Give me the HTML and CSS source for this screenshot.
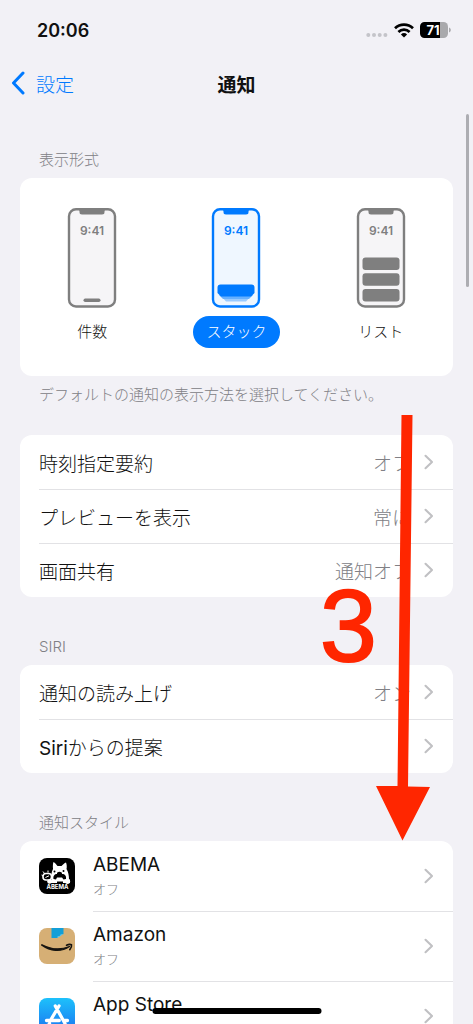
FILE: index.html
```html
<!DOCTYPE html>
<html lang="ja">
<head>
<meta charset="utf-8">
<meta name="viewport" content="width=device-width, initial-scale=1">
<title>通知</title>
<link rel="stylesheet" href="styles.css">
</head>
<body>
<svg class="defs" aria-hidden="true">
  <symbol id="chevron" viewBox="0 0 10 16"><path d="M1.5 1.8 8 8l-6.500 6.200" fill="none" stroke="currentColor" stroke-width="2.100" stroke-linecap="round" stroke-linejoin="round"/></symbol>
  <symbol id="handset" viewBox="0 0 50 100">
    <rect x="2" y="1.300" width="46" height="97.200" rx="7" fill="var(--screen)" stroke="currentColor" stroke-width="2.400"/>
    <path d="M9 1h32c-3 0-3.500 1-3.500 3 0 1.800-.8 2.500-2.500 2.500H15c-1.700 0-2.500-.7-2.500-2.500 0-2-.5-3-3.500-3z" fill="currentColor"/>
  </symbol>
</svg>
<div class="screen">
  <header class="top">
    <div class="status">
      <time class="time">20:06</time>
      <div class="indicators">
        <svg class="dots" viewBox="0 0 22 6" aria-hidden="true"><g fill="#c4c4c9"><circle cx="2.300" cy="3" r="2"/><circle cx="8" cy="3" r="2"/><circle cx="13.700" cy="3" r="2"/><circle cx="19.400" cy="3" r="2"/></g></svg>
        <svg class="wifi" viewBox="0 0 20 15" aria-hidden="true"><g fill="none" stroke="#000" stroke-width="2.700"><path d="M1 5.300a13 13 0 0 1 18 0"/><path d="M4.400 8.900a8.200 8.200 0 0 1 11.200 0"/></g><path d="M10 14.500 6.900 11.400a4.500 4.500 0 0 1 6.200 0z"/></svg>
        <svg class="battery" viewBox="0 0 32 16" aria-label="71%"><path d="M20 0h3.500a4.500 4.500 0 0 1 4.500 4.500v7a4.500 4.500 0 0 1-4.500 4.500H20z" fill="#a9a9ac"/><path d="M20 0H4.500A4.500 4.500 0 0 0 0 4.500v7A4.500 4.500 0 0 0 4.500 16H20z"/><path d="M29 5.500c2.400.8 2.400 4.200 0 5z" fill="#a9a9ac"/><text x="13" y="13" text-anchor="middle" class="level">71</text></svg>
      </div>
    </div>
    <nav class="nav">
      <a class="back" href="#"><svg class="back-icon" viewBox="0 0 14 24" aria-hidden="true"><path d="M12 2 2.500 12 12 22" fill="none" stroke="currentColor" stroke-width="3" stroke-linecap="round" stroke-linejoin="round"/></svg>設定</a>
      <h1 class="title">通知</h1>
    </nav>
  </header>

  <main class="content">
    <section class="group">
      <h2 class="label">表示形式</h2>
      <div class="card styles" role="radiogroup" aria-label="表示形式">
        <label class="style">
          <input class="pick" type="radio" name="style">
          <svg class="phone" viewBox="0 0 50 100" aria-hidden="true"><use href="#handset"/><text x="25" y="27" text-anchor="middle" class="clock">9:41</text><rect x="16.500" y="90.500" width="17" height="3.500" rx="1.700" fill="currentColor"/></svg>
          <span class="pill">件数</span>
        </label>
        <label class="style">
          <input class="pick" type="radio" name="style" checked>
          <svg class="phone" viewBox="0 0 50 100" aria-hidden="true"><use href="#handset"/><text x="25" y="27" text-anchor="middle" class="clock">9:41</text><path d="M10 88h30l-5 5.500H15z" fill="#99caff"/><path d="M8 87h34l-4 4H12z" fill="#66b0ff"/><path d="M9.500 76.500h31a3 3 0 0 1 3 3V85l-3.500 3.500H10L6.500 85v-5.500a3 3 0 0 1 3-3z" fill="currentColor"/></svg>
          <span class="pill">スタック</span>
        </label>
        <label class="style">
          <input class="pick" type="radio" name="style">
          <svg class="phone" viewBox="0 0 50 100" aria-hidden="true"><use href="#handset"/><text x="25" y="27" text-anchor="middle" class="clock">9:41</text><g fill="currentColor"><rect x="6.500" y="49.500" width="37" height="12.500" rx="3"/><rect x="6.500" y="65.200" width="37" height="12.500" rx="3"/><rect x="6.500" y="81" width="37" height="12.500" rx="3"/></g></svg>
          <span class="pill">リスト</span>
        </label>
      </div>
      <p class="note">デフォルトの通知の表示方法を選択してください。</p>
    </section>

    <section class="group plain">
      <div class="card">
        <a class="row" href="#"><span class="name">時刻指定要約</span><span class="value">オフ</span><svg class="chevron" aria-hidden="true"><use href="#chevron"/></svg></a>
        <a class="row" href="#"><span class="name">プレビューを表示</span><span class="value">常に</span><svg class="chevron" aria-hidden="true"><use href="#chevron"/></svg></a>
        <a class="row" href="#"><span class="name">画面共有</span><span class="value">通知オフ</span><svg class="chevron" aria-hidden="true"><use href="#chevron"/></svg></a>
      </div>
    </section>

    <section class="group">
      <h2 class="label">SIRI</h2>
      <div class="card">
        <a class="row" href="#"><span class="name">通知の読み上げ</span><span class="value">オン</span><svg class="chevron" aria-hidden="true"><use href="#chevron"/></svg></a>
        <a class="row" href="#"><span class="name"><span class="latin">Siri</span>からの提案</span><svg class="chevron" aria-hidden="true"><use href="#chevron"/></svg></a>
      </div>
    </section>

    <section class="group">
      <h2 class="label">通知スタイル</h2>
      <div class="card">
        <a class="row app" href="#">
          <svg class="icon" viewBox="0 0 36 36" aria-hidden="true"><rect width="36" height="36" rx="8"/><path d="M12.500 22c-.5-4-.2-8 1.500-11-.3-3 0-6 .5-7 1.500 1 3 2.500 4 4h4c1.300-1.500 3-3 4.500-3.500.8 1.800 1 4.500.5 6.500 1.800 3 2.500 6.500 2.500 10l1 1v3H10v-2z" fill="#fff"/><circle cx="15.500" cy="13.500" r="1"/><circle cx="24.500" cy="13" r="1"/><path d="M14.500 21c-.5-3 1-5 3.500-5h5c3 0 4.500 2 4 5l-2.500.5-1.500-2h-5l-1 2z"/><ellipse cx="20.500" cy="15.500" rx="2.600" ry="1.700"/><path d="M18 23.500h6V25h-6z"/><rect x="4" y="15.500" width="8.500" height="6.500" rx="3" fill="#000" stroke="#fff" stroke-width="1.600"/><path d="M6.500 19.500 10 17.800M4 13.500l1.200 1.500M9 12.500v2M2.500 17 4 18" stroke="#fff"/><circle cx="10.500" cy="23.500" r="2.300" fill="#fff"/><circle cx="28.500" cy="23.300" r="2.600" fill="#fff"/><text x="18.500" y="31" text-anchor="middle" class="abema">ABEMA</text></svg>
          <span class="about"><span class="app-name">ABEMA</span><span class="state">オフ</span></span>
          <svg class="chevron" aria-hidden="true"><use href="#chevron"/></svg>
        </a>
        <a class="row app" href="#">
          <svg class="icon" viewBox="0 0 36 36" aria-hidden="true"><rect width="36" height="36" rx="8" fill="#d6af75"/><path d="M12.500 0h12v6l-2 .5-1 1.500-2 .2-1 1.800h-6z" fill="#139fd7"/><path d="M18.500 10v-1.800l2-.2 1-1.500 3-.5z" fill="#58c8f0"/><path d="M2.500 17c9 6.500 19.500 7.500 28 1.500-8.500 3.500-18.500 3-27.500-1.800z" fill="#171511" stroke="#171511" stroke-width="1.200" stroke-linejoin="round"/><path d="M27.500 17.200c2-.9 4-.9 5-.5.3 1.600-.4 3.500-1.700 4.900" fill="none" stroke="#171511" stroke-width="1.600" stroke-linecap="round" stroke-linejoin="round"/></svg>
          <span class="about"><span class="app-name">Amazon</span><span class="state">オフ</span></span>
          <svg class="chevron" aria-hidden="true"><use href="#chevron"/></svg>
        </a>
        <a class="row app" href="#">
          <svg class="icon" viewBox="0 0 36 36" aria-hidden="true"><defs><linearGradient id="sky" x2="0" y2="1"><stop stop-color="#1dc1fb"/><stop offset="1" stop-color="#1b70f0"/></linearGradient></defs><rect width="36" height="36" rx="8" fill="url(#sky)"/><g fill="none" stroke="#fff" stroke-width="3.300" stroke-linecap="round"><path d="m16.300 8 9.700 17.500M20 8l-8 13.500M7.500 22.500h12.800M24.500 22.500h4M10.500 25.500l-.8 1.300"/></g></svg>
          <span class="about"><span class="app-name">App Store</span><span class="state">オフ</span></span>
          <svg class="chevron" aria-hidden="true"><use href="#chevron"/></svg>
        </a>
      </div>
    </section>
  </main>

  <div class="scrollbar"></div>
  <div class="home"></div>
  <svg class="mark" viewBox="0 0 112 426" aria-label="3"><path d="M83.500 0h11L90 371.500l22 .5-27.500 53.500L58 371h21.500z" fill="#ff2600"/><text x="2" y="246" class="step">3</text></svg>
</div>
</body>
</html>
```
FILE: styles.css
```css
* {
  box-sizing: border-box;
}

body {
  margin: 0;
  background: #f2f1f6;
  color: #111;
  font-family: Inter, "Noto Sans CJK JP", sans-serif;
  font-size: 19px;
  font-weight: 300;
}

a {
  color: inherit;
  text-decoration: none;
}

.defs {
  position: absolute;
  width: 0;
  height: 0;
}

.screen {
  position: relative;
  height: 100vh;
  overflow: hidden;
}

.status {
  display: flex;
  align-items: center;
  justify-content: space-between;
  height: 60px;
  padding: 0 21px 0 37px;
}

.time {
  font-size: 18px;
  font-weight: 600;
}

.indicators {
  display: flex;
  align-items: center;
  gap: 6px;
}

.dots {
  width: 22px;
  height: 6px;
  margin-top: 10px;
}

.wifi {
  width: 20px;
  height: 15px;
}

.battery {
  width: 32px;
  height: 16px;
}

.level {
  fill: #fff;
  font-size: 13px;
  font-weight: 700;
}

.nav {
  display: grid;
  grid-template-columns: 1fr auto 1fr;
  align-items: center;
  height: 46px;
  padding: 0 11px;
}

.back {
  display: flex;
  align-items: center;
  gap: 11px;
  color: #007aff;
}

.back-icon {
  width: 14px;
  height: 24px;
}

.title {
  margin: 0;
  font-size: 19px;
  font-weight: 700;
}

.content {
  padding: 4px 20px 0;
}

.group {
  padding-top: 40px;
}

.plain {
  padding-top: 30px;
}

.label,
.note {
  margin: 0;
  padding: 0 19px;
  color: #808085;
  font-size: 15px;
  font-weight: 300;
  line-height: 20px;
}

.label {
  margin-bottom: 8px;
}

.note {
  margin-top: 9px;
}

.card {
  overflow: hidden;
  border-radius: 12px;
  background: #fff;
}

.styles {
  display: grid;
  grid-template-columns: repeat(3, 1fr);
  padding: 30px 0 28px;
}

.style {
  --screen: #f6f5f7;
  display: flex;
  flex-direction: column;
  align-items: center;
  gap: 8px;
  color: #7f7f7f;
}

.style:has(:checked) {
  --screen: #eff7ff;
  color: #007aff;
}

.pick {
  position: absolute;
  opacity: 0;
}

.phone {
  width: 50px;
  height: 100px;
}

.clock {
  fill: currentColor;
  font-size: 12px;
  font-weight: 600;
}

.pill {
  padding: 0 13px;
  border-radius: 16px;
  color: #111;
  font-size: 15px;
  line-height: 32px;
}

.pick:checked ~ .pill {
  background: #007aff;
  color: #fff;
}

.row {
  position: relative;
  display: flex;
  align-items: center;
  height: 54px;
  padding: 0 19px;
}

.row + .row::before {
  content: "";
  position: absolute;
  top: 0;
  right: 0;
  left: 19px;
  height: 1px;
  background: #e2e2e5;
}

.name {
  flex: 1;
}

.latin {
  font-weight: 400;
}

.value {
  color: #808085;
}

.chevron {
  width: 10px;
  height: 16px;
  margin-left: 13px;
  color: #c0c0c3;
}

.app {
  height: 70px;
}

.app + .app::before {
  left: 73px;
}

.icon {
  width: 36px;
  height: 36px;
}

.abema {
  fill: #fff;
  font-size: 6px;
  font-weight: 700;
}

.about {
  display: flex;
  flex: 1;
  flex-direction: column;
  gap: 2px;
  margin-left: 18px;
}

.app-name {
  font-size: 19px;
  font-weight: 400;
  line-height: 24px;
}

.state {
  color: #808085;
  font-size: 13px;
  line-height: 20px;
}

.scrollbar {
  position: absolute;
  top: 114px;
  right: 4px;
  width: 3px;
  height: 173px;
  border-radius: 2px;
  background: #adadb2;
}

.home {
  position: absolute;
  bottom: 10px;
  left: 50%;
  width: 169px;
  height: 6px;
  border-radius: 3px;
  background: #000;
  transform: translateX(-50%);
}

.mark {
  position: absolute;
  top: 415px;
  right: 43px;
  width: 112px;
  height: 426px;
  pointer-events: none;
}

.step {
  fill: #ff2600;
  stroke: #ff2600;
  stroke-width: 2px;
  font-family: "Liberation Sans", sans-serif;
  font-size: 102px;
  font-weight: 400;
}
```
